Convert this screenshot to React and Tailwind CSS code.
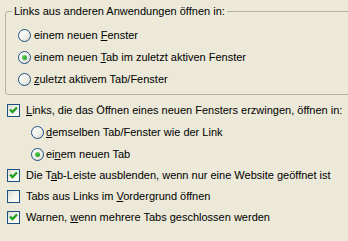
import React from "react";

function Radio({ checked }) {
	return (
		<span className="flex h-[13px] w-[13px] shrink-0 items-center justify-center rounded-full border border-[#1c5180] bg-linear-to-br from-white via-[#f4f3ee] to-[#d8d6cb]">
			{checked && (
				<span className="h-[5px] w-[5px] rounded-full bg-linear-to-br from-[#5fd85b] to-[#1f9a1f]" />
			)}
		</span>
	);
}

function Check({ checked }) {
	return (
		<span className="flex h-[13px] w-[13px] shrink-0 items-center justify-center border border-[#1c5180] bg-linear-to-br from-[#dcdcd7] via-[#f4f3ee] to-white">
			{checked && (
				<svg width="9" height="9" viewBox="0 0 9 9">
					<path d="M1 3.5 L3.5 6 L8 1.5" fill="none" stroke="#21a121" strokeWidth="2.4" />
				</svg>
			)}
		</span>
	);
}

export default function App() {
	return (
		<div
			className="h-[241px] w-[348px] overflow-hidden bg-[#ece9d8] pt-[11px] text-[11px] leading-[13px] text-black"
			style={{ fontFamily: '"Liberation Sans", Arial, sans-serif' }}>
			{/* group box */}
			<div className="ml-[5px] w-[360px] rounded-l-[3px] border border-[#b5b2a3] pb-[4px]">
				<div className="-mt-[7px] ml-[6px] w-fit bg-[#ece9d8] px-[2px]">
					Links aus anderen Anwendungen öffnen in:
				</div>
				<div className="mt-[6px] pl-[12px]">
					<div className="flex h-[22px] items-center gap-[3px]">
						<Radio />
						<span>
							einem neuen <u>F</u>enster
						</span>
					</div>
					<div className="flex h-[22px] items-center gap-[3px]">
						<Radio checked />
						<span>
							einem neuen <u>T</u>ab im zuletzt aktiven Fenster
						</span>
					</div>
					<div className="flex h-[22px] items-center gap-[3px]">
						<Radio />
						<span>
							<u>z</u>uletzt aktivem Tab/Fenster
						</span>
					</div>
				</div>
			</div>

			<div className="mt-[4px] pl-[7px]">
				<div className="flex h-[22px] items-center gap-[6px]">
					<Check checked />
					<span>
						<u>L</u>inks, die das Öffnen eines neuen Fensters erzwingen, öffnen in:
					</span>
				</div>
				<div className="flex h-[22px] items-center gap-[2px] pl-[24px]">
					<Radio />
					<span>
						<u>d</u>emselben Tab/Fenster wie der Link
					</span>
				</div>
				<div className="flex h-[22px] items-center gap-[2px] pl-[24px]">
					<Radio checked />
					<span>
						ei<u>n</u>em neuen Tab
					</span>
				</div>
				<div className="flex h-[21px] items-center gap-[6px]">
					<Check checked />
					<span>
						Die T<u>a</u>b-Leiste ausblenden, wenn nur eine Website geöffnet ist
					</span>
				</div>
				<div className="flex h-[21px] items-center gap-[6px]">
					<Check />
					<span>
						Tabs aus Links im <u>V</u>ordergrund öffnen
					</span>
				</div>
				<div className="flex h-[21px] items-center gap-[6px]">
					<Check checked />
					<span>
						Warnen, <u>w</u>enn mehrere Tabs geschlossen werden
					</span>
				</div>
			</div>
		</div>
	);
}
